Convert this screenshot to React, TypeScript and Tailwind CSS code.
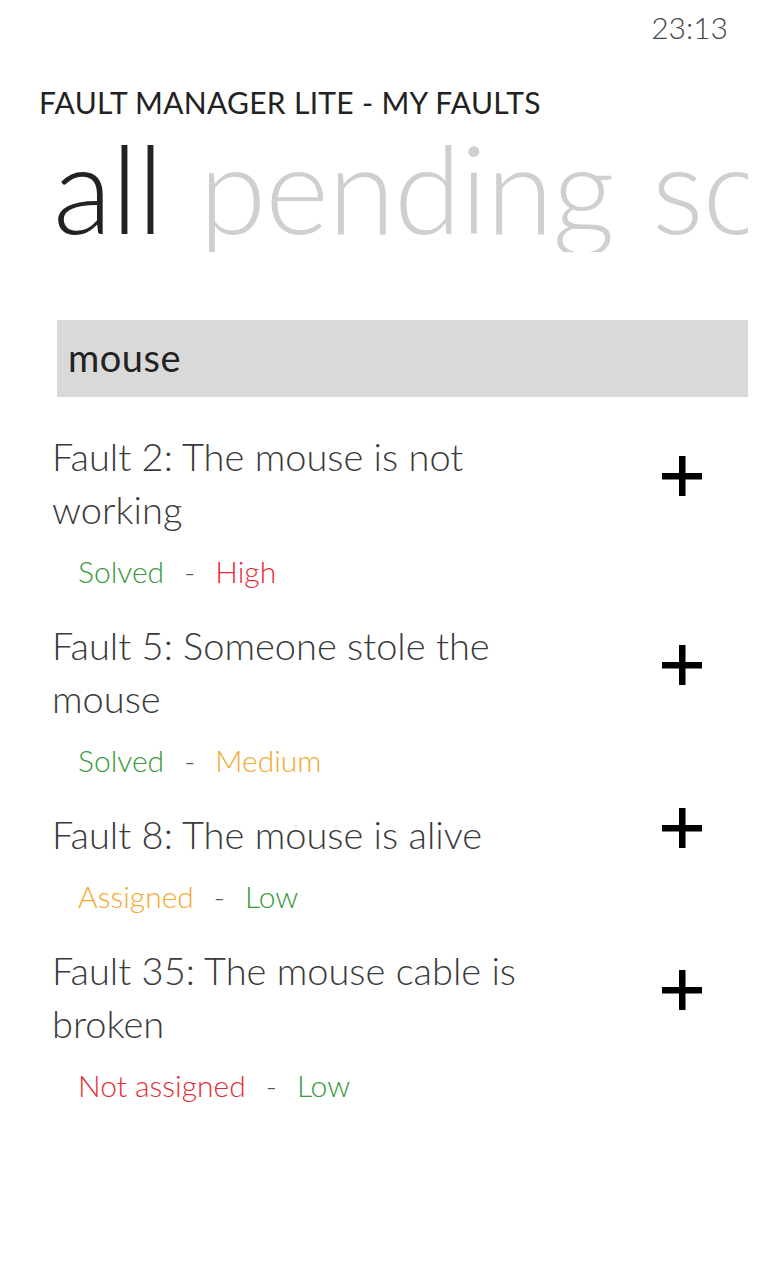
const faults = [
  { title: "Fault 2: The mouse is not working", status: "Solved", statusColor: "text-[#38993a]", priority: "High", priorityColor: "text-[#e82a33]" },
  { title: "Fault 5: Someone stole the mouse", status: "Solved", statusColor: "text-[#38993a]", priority: "Medium", priorityColor: "text-[#f2a92c]" },
  { title: "Fault 8: The mouse is alive", status: "Assigned", statusColor: "text-[#f2a92c]", priority: "Low", priorityColor: "text-[#38993a]" },
  { title: "Fault 35: The mouse cable is broken", status: "Not assigned", statusColor: "text-[#e82a33]", priority: "Low", priorityColor: "text-[#38993a]" },
]

function Plus() {
  return (
    <svg width="44" height="44" viewBox="0 0 44 44">
      <rect x="19" y="2" width="6.5" height="40" fill="#000" />
      <rect x="2" y="19" width="40" height="6.5" fill="#000" />
    </svg>
  )
}

export default function App() {
  return (
    <div className="w-[768px] h-[1280px] bg-white overflow-hidden font-['Lato','Open_Sans',sans-serif] font-light text-[#333]">
      <div className="flex justify-end pr-[40px] pt-[10px] h-[55px] text-[30px] leading-[34px] text-[#444]">
        23:13
      </div>

      <div className="pl-[39px] mt-[31px] text-[30px] leading-[32px] tracking-[0.3px] text-[#222] font-normal">
        FAULT MANAGER LITE - MY FAULTS
      </div>

      <div className="flex whitespace-nowrap overflow-hidden pl-[53px] mt-[4px] text-[122px] leading-[130px] tracking-[-1px] w-[748px]">
        <span className="text-[#222]">all</span>
        <span className="ml-[36px] text-[#cfcfcf]">pending</span>
        <span className="ml-[38px] text-[#cfcfcf]">solved</span>
      </div>

      <div className="ml-[57px] mr-[20px] mt-[68px] h-[77px] bg-[#d9d9d9] flex items-center pl-[11px] pb-[2px] text-[38px] tracking-[0.5px] text-[#222] font-normal">
        mouse
      </div>

      <div className="pl-[52px] pt-[33px]">
        {faults.map((f) => (
          <div key={f.title} className="mb-[28px]">
            <div className="flex items-center">
              <div className="w-[545px] text-[38px] leading-[53px] text-[#3a3a3a]">{f.title}</div>
              <div className="ml-[63px] -translate-y-[7px]">
                <Plus />
              </div>
            </div>
            <div className="pl-[26px] mt-[15px] text-[30px] leading-[40px] flex">
              <span className={f.statusColor}>{f.status}</span>
              <span className="mx-[20px] text-[#555]">-</span>
              <span className={f.priorityColor}>{f.priority}</span>
            </div>
          </div>
        ))}
      </div>
    </div>
  )
}
